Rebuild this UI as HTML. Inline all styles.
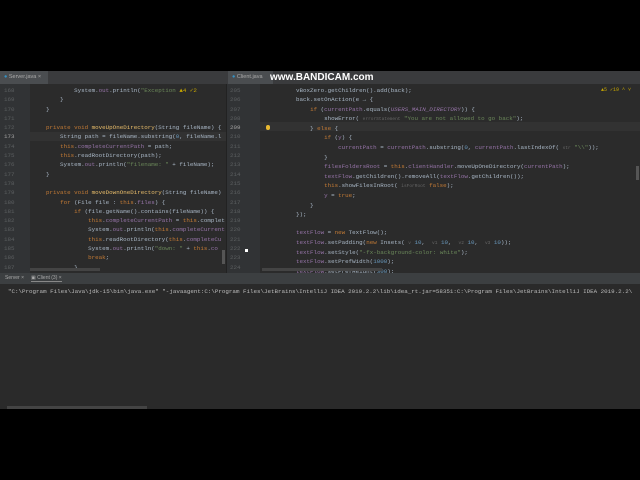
<!DOCTYPE html>
<html><head><meta charset="utf-8"><style>
*{margin:0;padding:0;box-sizing:border-box}
body{width:640px;height:480px;background:#000;position:relative;overflow:hidden;font-family:"Liberation Mono",monospace;font-size:5.85px;color:#a9b7c6}
.a{position:absolute;white-space:pre;line-height:9.3px}
.k{color:#c27a35}.m{color:#e9bd6a}.s{color:#6a8759}.f{color:#9674a8}.n{color:#5c5f61}.h{color:#666;font-size:4.5px}.i{font-style:italic;color:#9674a8}
</style></head><body>
<div class="a" style="left:0;top:71px;width:640px;height:13px;background:#3a3b3d"></div>
<div class="a" style="left:0;top:71px;width:48px;height:13px;background:#4a4d50;color:#aaa;font-family:'Liberation Sans',sans-serif;font-size:5.5px;line-height:13px;padding-left:4px"><span style="color:#3592c4">●</span> Server.java ×</div>
<div class="a" style="left:228px;top:71px;width:45px;height:13px;background:#4a4d50;color:#aaa;font-family:'Liberation Sans',sans-serif;font-size:5.5px;line-height:13px;padding-left:4px"><span style="color:#3592c4">●</span> Client.java</div>
<div class="a" style="left:270px;top:71px;color:#fff;font-family:'Liberation Sans',sans-serif;font-size:10px;font-weight:bold;line-height:14px">www.BANDICAM.com</div>
<div class="a" style="left:0;top:84px;width:227px;height:189px;background:#2b2b2b"></div>
<div class="a" style="left:0;top:84px;width:30px;height:189px;background:#313335"></div>
<div class="a" style="left:227px;top:84px;width:413px;height:189px;background:#2b2b2b"></div>
<div class="a" style="left:227px;top:84px;width:33px;height:189px;background:#313335"></div>
<div class="a" style="left:30px;top:132px;width:197px;height:9px;background:#323232"></div>
<div class="a" style="left:260px;top:122px;width:380px;height:9px;background:#323232"></div>
<div class="a n" style="left:4px;top:86px">168
169
170
171
172
<span style="color:#a4a3a3">173</span>
174
175
176
177
178
179
180
181
182
183
184
185
186
187</div>
<div class="a" style="left:32px;top:86px">            System.<span class="f">out</span>.println(<span class="s">"Exception</span> <span style="color:#c9a800">▲4 ✓2</span>
        }
    }

    <span class="k">private void</span> <span class="m">moveUpOneDirectory</span>(String fileName) {
        String path = fileName.substring(<span style="color:#6897bb">0</span>, fileName.l
        <span class="k">this</span>.<span class="f">completeCurrentPath</span> = path;
        <span class="k">this</span>.readRootDirectory(path);
        System.<span class="f">out</span>.println(<span class="s">"filename: "</span> + fileName);
    }

    <span class="k">private void</span> <span class="m">moveDownOneDirectory</span>(String fileName)
        <span class="k">for</span> (File file : <span class="k">this</span>.<span class="f">files</span>) {
            <span class="k">if</span> (file.getName().contains(fileName)) {
                <span class="k">this</span>.<span class="f">completeCurrentPath</span> = <span class="k">this</span>.complet
                System.<span class="f">out</span>.println(<span class="k">this</span>.<span class="f">completeCurrent</span>
                <span class="k">this</span>.readRootDirectory(<span class="k">this</span>.<span class="f">completeCu</span>
                System.<span class="f">out</span>.println(<span class="s">"down: "</span> + <span class="k">this</span>.<span class="f">co</span>
                <span class="k">break</span>;
            }</div>
<div class="a" style="left:226px;top:84px;width:1px;height:189px;background:#222"></div>
<div class="a n" style="left:230px;top:86px">205
206
207
208
<span style="color:#a4a3a3">209</span>
210
211
212
213
214
215
216
217
218
219
220
221
222
223
224</div>
<div class="a" style="left:282px;top:86px">    vBoxZero.getChildren().add(back);
    back.setOnAction(e → {
        <span class="k">if</span> (<span class="f">currentPath</span>.equals(<span class="i">USERS_MAIN_DIRECTORY</span>)) {
            showError( <span class="h">errorStatement</span> <span class="s">"You are not allowed to go back"</span>);
        } <span class="k">else</span> {
            <span class="k">if</span> (<span class="f">y</span>) {
                <span class="f">currentPath</span> = <span class="f">currentPath</span>.substring(<span style="color:#6897bb">0</span>, <span class="f">currentPath</span>.lastIndexOf( <span class="h">str</span> <span class="s">"\\"</span>));
            }
            <span class="f">filesFoldersRoot</span> = <span class="k">this</span>.<span class="f">clientHandler</span>.moveUpOneDirectory(<span class="f">currentPath</span>);
            <span class="f">textFlow</span>.getChildren().removeAll(<span class="f">textFlow</span>.getChildren());
            <span class="k">this</span>.showFilesInRoot( <span class="h">isForRoot</span> <span class="k">false</span>);
            <span class="f">y</span> = <span class="k">true</span>;
        }
    });

    <span class="f">textFlow</span> = <span class="k">new</span> TextFlow();
    <span class="f">textFlow</span>.setPadding(<span class="k">new</span> Insets( <span class="h">v</span> <span style="color:#6897bb">10</span>,  <span class="h">v1</span> <span style="color:#6897bb">10</span>,  <span class="h">v2</span> <span style="color:#6897bb">10</span>,  <span class="h">v3</span> <span style="color:#6897bb">10</span>));
    <span class="f">textFlow</span>.setStyle(<span class="s">"-fx-background-color: white"</span>);
    <span class="f">textFlow</span>.setPrefWidth(<span style="color:#6897bb">1000</span>);
    <span class="f">textFlow</span>.setPrefHeight(<span style="color:#6897bb">300</span>);</div>
<div class="a" style="left:601px;top:86px;color:#c9a800;font-size:5px">▲5 ✓19 ^ ˅</div>
<div class="a" style="left:266px;top:125px;width:4px;height:5px;background:#e8b830;border-radius:2px"></div>
<div class="a" style="left:245px;top:249px;width:3px;height:3px;background:#fff"></div>
<div class="a" style="left:222px;top:250px;width:3px;height:14px;background:#555"></div>
<div class="a" style="left:636px;top:166px;width:3px;height:14px;background:#555"></div>
<div class="a" style="left:30px;top:268px;width:70px;height:3px;background:#444"></div>
<div class="a" style="left:262px;top:268px;width:120px;height:3px;background:#444"></div>
<div class="a" style="left:0;top:273px;width:640px;height:11px;background:#3c3f41;color:#aaa;font-family:'Liberation Sans',sans-serif;font-size:5px;line-height:11px;padding-left:5px">Server ×     <span style="border-bottom:1px solid #888">▣ Client (3) ×</span></div>
<div class="a" style="left:0;top:284px;width:640px;height:125px;background:#2a2a2a;color:#bbb;padding:3px 0 0 8px">"C:\Program Files\Java\jdk-15\bin\java.exe" "-javaagent:C:\Program Files\JetBrains\IntelliJ IDEA 2019.2.2\lib\idea_rt.jar=58351:C:\Program Files\JetBrains\IntelliJ IDEA 2019.2.2\</div>
<div class="a" style="left:7px;top:406px;width:140px;height:3px;background:#444"></div>
</body></html>
